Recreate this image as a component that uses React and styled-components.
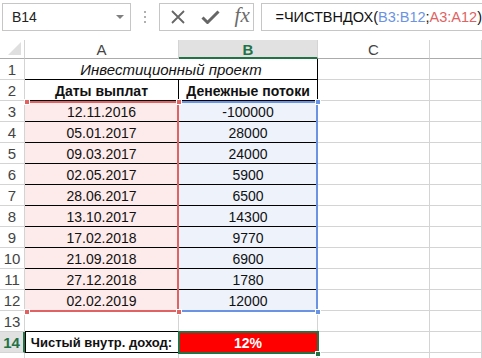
import React from 'react';
import styled, { createGlobalStyle } from 'styled-components';

const GlobalStyle = createGlobalStyle`
  html, body {
    margin: 0;
    padding: 0;
    background: #fff;
  }
  body {
    font-family: "Liberation Sans", Arial, sans-serif;
    overflow: hidden;
  }
`;

const COLS = [25, 154, 139, 112];
const HEAD_H = 19;
const ROW_H = 21;

const rows = [
  ['12.11.2016', '-100000'],
  ['05.01.2017', '28000'],
  ['09.03.2017', '24000'],
  ['02.05.2017', '5900'],
  ['28.06.2017', '6500'],
  ['13.10.2017', '14300'],
  ['17.02.2018', '9770'],
  ['21.09.2018', '6900'],
  ['27.12.2018', '1780'],
  ['02.02.2019', '12000'],
];

const Page = styled.div`
  width: 482px;
  height: 358px;
  display: flex;
  flex-direction: column;
  overflow: hidden;
`;

const Toolbar = styled.div`
  flex-shrink: 0;
  height: 40px;
  display: flex;
  align-items: flex-start;
  padding: 3px 0 0 2px;
  box-sizing: border-box;
`;

const NameBox = styled.div`
  width: 140px;
  height: 28px;
  box-sizing: border-box;
  border: 1px solid #c6c6c6;
  display: flex;
  align-items: center;
  justify-content: space-between;
  padding: 0 6px 0 9px;
  font-size: 14px;
  color: #222;
`;

const Caret = styled.span`
  width: 0;
  height: 0;
  border-left: 4px solid transparent;
  border-right: 4px solid transparent;
  border-top: 4px solid #808080;
`;

const Grip = styled.div`
  width: 30px;
  height: 28px;
  display: flex;
  flex-direction: column;
  align-items: center;
  justify-content: center;
  gap: 3px;

  span {
    width: 2px;
    height: 2px;
    background: #b0b0b0;
  }
`;

const FxGroup = styled.div`
  width: 104px;
  height: 28px;
  box-sizing: border-box;
  border: 1px solid #c6c6c6;
  display: flex;
  align-items: center;
  padding-left: 10px;
  gap: 15px;
`;

const FxLabel = styled.span`
  font-family: "Liberation Serif", "Times New Roman", serif;
  font-style: italic;
  font-size: 21px;
  color: #6b6b6b;
  line-height: 1;
  margin-top: -3px;
`;

const FormulaBox = styled.div`
  flex: 1;
  height: 28px;
  margin-left: 7px;
  box-sizing: border-box;
  border: 1px solid #c6c6c6;
  border-right: none;
  display: flex;
  align-items: center;
  padding-left: 13px;
  font-size: 14.5px;
  color: #111;
  white-space: nowrap;
`;

const Ref = styled.span`
  color: ${p => p.$tone === 'red' ? '#e06262' : '#6b93e4'};
`;

const Sheet = styled.div`
  flex-shrink: 0;
  position: relative;
  display: grid;
  grid-template-columns: ${COLS.map(c => c + 'px').join(' ')} 1fr;
  grid-template-rows: ${HEAD_H}px repeat(15, ${ROW_H}px);
`;

const Corner = styled.div`
  border-right: 1px solid #d4d4d4;
  border-bottom: 1px solid #ababab;
  box-sizing: border-box;
  position: relative;

  &::after {
    content: '';
    position: absolute;
    right: 3px;
    bottom: 3px;
    border-left: 13px solid transparent;
    border-bottom: 13px solid #dfdfdf;
  }
`;

const ColHead = styled.div`
  box-sizing: border-box;
  border-right: 1px solid #d4d4d4;
  border-bottom: ${p => p.$active ? '2px solid #217346' : '1px solid #ababab'};
  background: ${p => p.$active ? '#e1e1e1' : '#fff'};
  color: ${p => p.$active ? '#217346' : '#444'};
  font-weight: ${p => p.$active ? 700 : 400};
  font-size: 15px;
  display: flex;
  align-items: center;
  justify-content: center;
  padding-top: 1px;
`;

const RowHead = styled.div`
  box-sizing: border-box;
  border-right: ${p => p.$active ? '2px solid #217346' : '1px solid #d4d4d4'};
  border-bottom: 1px solid #d4d4d4;
  background: ${p => p.$active ? '#e1e1e1' : '#fff'};
  color: ${p => p.$active ? '#217346' : '#444'};
  font-weight: ${p => p.$active ? 700 : 400};
  font-size: 15px;
  display: flex;
  align-items: center;
  justify-content: center;
`;

const Cell = styled.div`
  box-sizing: border-box;
  grid-column: span ${p => p.$span || 1};
  border-right: 1px solid ${p => p.$edgeR ? '#000' : '#d4d4d4'};
  border-bottom: 1px solid ${p => p.$edgeB ? '#000' : '#d4d4d4'};
  box-shadow: ${p => p.$edgeL ? 'inset 1px 0 0 #000' : 'none'};
  background: ${p => p.$fill || '#fff'};
  color: ${p => p.$ink || '#111'};
  font-size: ${p => p.$size || 14}px;
  font-weight: ${p => p.$bold ? 700 : 400};
  font-style: ${p => p.$italic ? 'italic' : 'normal'};
  display: flex;
  align-items: center;
  justify-content: center;
  white-space: nowrap;
  overflow: hidden;
  padding-top: 1px;
`;

const Range = styled.div`
  position: absolute;
  box-sizing: border-box;
  border: 2px solid ${p => p.$color};
  border-left: none;
  pointer-events: none;
`;

const Handle = styled.div`
  position: absolute;
  width: 6px;
  height: 6px;
  box-sizing: border-box;
  background: ${p => p.$color};
  border: 1px solid #fff;
`;

const Selection = styled.div`
  position: absolute;
  box-sizing: border-box;
  border: 2px solid #217346;
`;

const colX = i => COLS.slice(0, i).reduce((a, b) => a + b, 0);
const rowY = r => HEAD_H + (r - 1) * ROW_H;

const PINK = '#fdeaea';
const BLUE = '#edf2fb';
const RED_LINE = '#e06262';
const BLUE_LINE = '#6b93e4';

const CancelIcon = () => (
  <svg width="16" height="16" viewBox="0 0 16 16">
    <path d="M2 2 L14 14 M14 2 L2 14" stroke="#666" strokeWidth="1.8" fill="none" />
  </svg>
);

const EnterIcon = () => (
  <svg width="19" height="16" viewBox="0 0 19 16">
    <path d="M1.5 8.5 L6.5 13.5 L17.5 2.5" stroke="#666" strokeWidth="3" fill="none" strokeLinejoin="round" />
  </svg>
);

const App = () => {
  const dataRows = rows.map((r, i) => {
    const n = i + 3;
    return (
      <React.Fragment key={n}>
        <RowHead>{n}</RowHead>
        <Cell $fill={PINK} $edgeR $edgeB>{r[0]}</Cell>
        <Cell $fill={BLUE} $edgeR $edgeB>{r[1]}</Cell>
        <Cell />
        <Cell />
      </React.Fragment>
    );
  });

  const aLeft = colX(1);
  const bLeft = colX(2);
  const top3 = rowY(3);
  const bottom12 = rowY(13);

  return (
    <Page>
      <GlobalStyle />
      <Toolbar>
        <NameBox>
          <span>B14</span>
          <Caret />
        </NameBox>
        <Grip><span /><span /><span /></Grip>
        <FxGroup>
          <CancelIcon />
          <EnterIcon />
          <FxLabel>fx</FxLabel>
        </FxGroup>
        <FormulaBox>
          =ЧИСТВНДОХ(<Ref $tone="blue">B3:B12</Ref>;<Ref $tone="red">A3:A12</Ref>)
        </FormulaBox>
      </Toolbar>

      <Sheet>
        <Corner />
        <ColHead>A</ColHead>
        <ColHead $active>B</ColHead>
        <ColHead>C</ColHead>
        <ColHead />

        <RowHead>1</RowHead>
        <Cell $span={2} $italic $size={15} $edgeR $edgeB>Инвестиционный проект</Cell>
        <Cell />
        <Cell />

        <RowHead>2</RowHead>
        <Cell $bold $edgeR $edgeB>Даты выплат</Cell>
        <Cell $bold $edgeR $edgeB>Денежные потоки</Cell>
        <Cell />
        <Cell />

        {dataRows}

        <RowHead>13</RowHead>
        <Cell $edgeB />
        <Cell />
        <Cell />
        <Cell />

        <RowHead $active>14</RowHead>
        <Cell $bold $size={13} $edgeR $edgeB $edgeL>Чистый внутр. доход:</Cell>
        <Cell $fill="#ff0000" $ink="#fff" $bold>12%</Cell>
        <Cell />
        <Cell />

        {/* next row only peeks in under the bottom edge */}
        <RowHead />
        <Cell />
        <Cell />
        <Cell />
        <Cell />

        <Range
          $color={RED_LINE}
          style={{ left: aLeft, top: top3, width: COLS[1], height: bottom12 - top3 + 1 }}
        />
        <Range
          $color={BLUE_LINE}
          style={{ left: bLeft, top: top3, width: COLS[2], height: bottom12 - top3 + 1 }}
        />
        <Handle $color={RED_LINE} style={{ left: aLeft - 1, top: top3 - 2 }} />
        <Handle $color={RED_LINE} style={{ left: bLeft - 3, top: top3 - 2 }} />
        <Handle $color={RED_LINE} style={{ left: aLeft - 1, top: bottom12 - 2 }} />
        <Handle $color={RED_LINE} style={{ left: bLeft - 3, top: bottom12 - 2 }} />
        <Handle $color={BLUE_LINE} style={{ left: bLeft + COLS[2] - 3, top: top3 - 2 }} />
        <Handle $color={BLUE_LINE} style={{ left: bLeft + COLS[2] - 3, top: bottom12 - 2 }} />

        <Selection
          style={{ left: bLeft - 1, top: rowY(14) - 1, width: COLS[2] + 2, height: ROW_H + 2 }}
        />
        <Handle $color="#217346" style={{ left: bLeft + COLS[2] - 3, top: rowY(15) - 2 }} />
      </Sheet>
    </Page>
  );
};

export default App;
